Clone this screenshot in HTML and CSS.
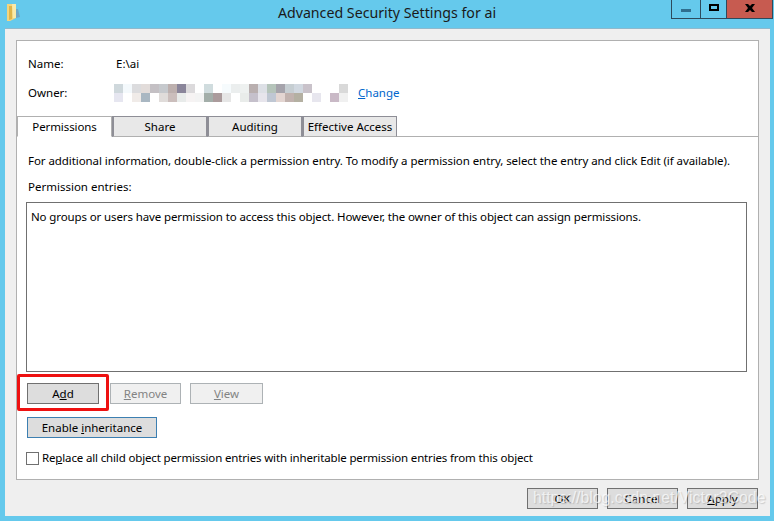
FILE: index.html
```html
<!DOCTYPE html>
<html lang="en">
<head>
    <meta charset="UTF-8">
    <title>Advanced Security Settings for ai</title>
    <link rel="stylesheet" href="styles.css">
</head>
<body>
    <div class="window">
        <!-- Title bar -->
        <div class="titlebar">
            <svg class="folder-icon" width="16" height="18" viewBox="0 0 16 18">
                <path d="M1 1h5l1 1h3v13l-6 3H1z" fill="#f3d57f"/>
                <path d="M3 3h3v13l-3 1z" fill="#e0b54a"/>
                <path d="M6 1h4v14H7z" fill="#fbe9a8"/>
                <path d="M10 6h2l2 8-4 1z" fill="#6fa6c4"/>
            </svg>
            <div class="title">Advanced Security Settings for ai</div>
            <div class="controls">
                <div class="ctl ctl-min"><span class="min-bar"></span></div>
                <div class="ctl ctl-max"><span class="max-box"></span></div>
                <div class="ctl ctl-close">
                    <svg width="10" height="8" viewBox="0 0 10 8"><path d="M0 0h3l2 2 2-2h3L7 4l3 4H7L5 6 3 8H0l3-4z" fill="#000"/></svg>
                </div>
            </div>
        </div>
        <div class="client">
            <div class="panel">
                <!-- Name and owner -->
                <div class="info-row row-name"><span class="info-label">Name:</span><span>E:\ai</span></div>
                <div class="info-row row-owner">
                    <span class="info-label">Owner:</span>
                    <svg class="owner-blur" width="234" height="18" viewBox="0 0 26 2" preserveAspectRatio="none" shape-rendering="crispEdges">
                        <g id="r1">
                            <rect x="0" y="0" width="1" height="1" fill="#cfd8dc"/><rect x="1" y="0" width="1" height="1" fill="#f4f9fc"/><rect x="2" y="0" width="1" height="1" fill="#dcdcde"/><rect x="3" y="0" width="1" height="1" fill="#e2dcda"/><rect x="4" y="0" width="1" height="1" fill="#c4c0c4"/><rect x="5" y="0" width="1" height="1" fill="#c6c9cd"/><rect x="6" y="0" width="1" height="1" fill="#bdb0ae"/><rect x="7" y="0" width="1" height="1" fill="#8a859a"/><rect x="8" y="0" width="1" height="1" fill="#dcdadc"/><rect x="10" y="0" width="1" height="1" fill="#d0dcde"/><rect x="12" y="0" width="1" height="1" fill="#f6fbfd"/><rect x="13" y="0" width="1" height="1" fill="#ebeeee"/><rect x="14" y="0" width="1" height="1" fill="#eef1f0"/><rect x="15" y="0" width="1" height="1" fill="#b9afaf"/><rect x="16" y="0" width="1" height="1" fill="#dde0e6"/><rect x="17" y="0" width="1" height="1" fill="#b5c4ba"/><rect x="18" y="0" width="1" height="1" fill="#a5a3ab"/><rect x="19" y="0" width="1" height="1" fill="#c6ced2"/><rect x="20" y="0" width="1" height="1" fill="#d1d8e0"/><rect x="21" y="0" width="1" height="1" fill="#c9c2ca"/><rect x="25" y="0" width="1" height="1" fill="#d9d9d9"/>
                        </g>
                        <g id="r2">
                            <rect x="0" y="1" width="1" height="1" fill="#e6e6f0"/><rect x="2" y="1" width="1" height="1" fill="#f0ebe8"/><rect x="3" y="1" width="1" height="1" fill="#a9b7c2"/><rect x="5" y="1" width="1" height="1" fill="#e0dcda"/><rect x="6" y="1" width="1" height="1" fill="#cbbebc"/><rect x="7" y="1" width="1" height="1" fill="#e8ebea"/><rect x="8" y="1" width="1" height="1" fill="#f6f3f3"/><rect x="9" y="1" width="1" height="1" fill="#f3f3f3"/><rect x="10" y="1" width="1" height="1" fill="#a3aea9"/><rect x="11" y="1" width="1" height="1" fill="#ab9b9c"/><rect x="12" y="1" width="1" height="1" fill="#e6e6e6"/><rect x="14" y="1" width="1" height="1" fill="#e9ecea"/><rect x="15" y="1" width="1" height="1" fill="#c5c0cb"/><rect x="16" y="1" width="1" height="1" fill="#e7e5ec"/><rect x="17" y="1" width="1" height="1" fill="#bfc7d3"/><rect x="18" y="1" width="1" height="1" fill="#e3d5d1"/><rect x="19" y="1" width="1" height="1" fill="#c1b2ae"/><rect x="20" y="1" width="1" height="1" fill="#b4b0a2"/><rect x="22" y="1" width="1" height="1" fill="#e7e6ee"/><rect x="24" y="1" width="1" height="1" fill="#c9b9c6"/><rect x="25" y="1" width="1" height="1" fill="#f0f0f0"/>
                        </g>
                    </svg>
                    <a class="change-link" href="#"><u>C</u>hange</a>
                </div>
                <!-- Tabs -->
                <div class="tabs">
                    <div class="tab tab-active">Permissions</div>
                    <div class="tab">Share</div>
                    <div class="tab">Auditing</div>
                    <div class="tab">Effective Access</div>
                </div>
                <!-- Permissions tab -->
                <div class="tab-body">
                    <p class="hint">For additional information, double-click a permission entry. To modify a permission entry, select the entry and click Edit (if available).</p>
                    <p class="entries-label">Permission entries:</p>
                    <div class="entries-box">No groups or users have permission to access this object. However, the owner of this object can assign permissions.</div>
                    <div class="btn-row">
                        <div class="add-wrap">
                            <button class="btn btn-add">A<u>d</u>d</button>
                            <span class="highlight"></span>
                        </div>
                        <button class="btn btn-off btn-remove"><u>R</u>emove</button>
                        <button class="btn btn-off btn-view"><u>V</u>iew</button>
                    </div>
                    <button class="btn btn-inherit">Enable <u>i</u>nheritance</button>
                    <label class="replace-row"><span class="checkbox"></span><span class="replace-text">Re<u>p</u>lace all child object permission entries with inheritable permission entries from this object</span></label>
                </div>
            </div>
            <!-- Dialog buttons -->
            <div class="footer">
                <button class="btn btn-foot">OK</button>
                <button class="btn btn-foot">Cancel</button>
                <button class="btn btn-foot"><u>A</u>pply</button>
            </div>
            <div class="watermark">https://blog.csdn.net/Victor2Code</div>
        </div>
    </div>
</body>
</html>
```

FILE: styles.css
```css
* {
    box-sizing: border-box;
}
html, body {
    margin: 0;
    height: 100%;
}
body {
    background: #65c9ec;
    color: #000;
    font-family: "Noto Sans", sans-serif;
    font-size: 11.5px;
    overflow: hidden;
}
.window {
    width: 774px;
    height: 521px;
    display: flex;
    flex-direction: column;
}
.titlebar {
    height: 28px;
    position: relative;
    display: flex;
    flex: none;
}
.folder-icon {
    margin: 3px 0 0 6px;
}
.title {
    position: absolute;
    left: 0;
    width: 774px;
    top: 3px;
    text-align: center;
    font-size: 14.2px;
    color: #1a1a1a;
}
.controls {
    position: absolute;
    top: 0;
    left: 671px;
    display: flex;
    height: 19px;
    border: 1px solid #2d4a5c;
    border-top: none;
}
.ctl {
    display: flex;
    justify-content: center;
    border-left: 1px solid #2d4a5c;
}
.ctl:first-child {
    border-left: none;
}
.ctl-min {
    width: 28px;
}
.ctl-max {
    width: 26px;
}
.ctl-close {
    width: 46px;
    background: #c75b50;
    padding-top: 4px;
}
.min-bar {
    width: 10px;
    height: 3px;
    margin-top: 9px;
    background: #2f6f8f;
}
.max-box {
    width: 10px;
    height: 7px;
    margin-top: 4px;
    border: 2px solid #000;
}
.client {
    flex: 1;
    margin: 0 4px 5px 5px;
    padding: 11px 11px 0;
    background: #efefef;
    border-top: 1px solid #8fb9cc;
    position: relative;
}
.panel {
    height: 440px;
    background: #fff;
    border: 1px solid #b0b0b0;
    display: flex;
    flex-direction: column;
}
.info-row {
    display: flex;
    align-items: center;
    height: 18px;
    padding-left: 11px;
}
.row-name {
    margin-top: 13px;
}
.row-owner {
    margin-top: 11px;
}
.info-label {
    width: 88px;
}
.owner-blur {
    width: 234px;
    height: 18px;
    margin: 1px 0 0 -2px;
}
.change-link {
    margin-left: 10px;
    color: #0066cc;
    text-decoration: none;
}
.tabs {
    display: flex;
    margin-top: 15px;
    height: 21px;
    border-bottom: 1px solid #b0b0b0;
}
.tab {
    width: 95px;
    height: 21px;
    background: #e8e8e8;
    border: 1px solid #8e8e96;
    border-left-width: 2px;
    border-bottom-color: #b0b0b0;
    display: flex;
    align-items: center;
    justify-content: center;
}
.tab-active {
    background: #fff;
    border-color: #b0b0b0;
    border-left-width: 1px;
    border-bottom-color: #fff;
    letter-spacing: -0.1px;
}
.tab-body {
    flex: 1;
    padding: 0 11px 0 9px;
}
.hint {
    margin: 16px 0 0 2px;
    line-height: 16px;
    white-space: nowrap;
    letter-spacing: -0.07px;
}
.entries-label {
    margin: 10px 0 0 2px;
    line-height: 16px;
}
.entries-box {
    margin-top: 7px;
    height: 170px;
    width: 721px;
    border: 1px solid #707070;
    padding: 6px 5px 6px 4px;
    line-height: 16px;
    letter-spacing: -0.12px;
}
.btn-row {
    display: flex;
    margin: 11px 0 0 1px;
}
.add-wrap {
    position: relative;
    display: flex;
}
.btn {
    height: 21px;
    padding: 0;
    font: inherit;
    color: #000;
    background: #dddddd;
    border: 1px solid #707070;
    border-radius: 0;
}
.btn-add {
    width: 72px;
}
.highlight {
    position: absolute;
    left: -10px;
    top: -9px;
    width: 92px;
    height: 37px;
    border: 3px solid #ee1111;
    border-radius: 2px;
}
.btn-off {
    background: #f0f0f0;
    border-color: #adb2b5;
    color: #838383;
}
.btn-remove {
    width: 71px;
    margin-left: 11px;
}
.btn-view {
    width: 73px;
    margin-left: 9px;
}
.btn-inherit {
    display: block;
    width: 130px;
    margin: 13px 0 0 1px;
    border-color: #3c7fb1;
}
.replace-row {
    display: flex;
    align-items: center;
    height: 16px;
    margin-top: 12px;
    white-space: nowrap;
}
.replace-text {
    letter-spacing: -0.15px;
    margin-top: -2px;
}
.checkbox {
    width: 13px;
    height: 13px;
    margin-right: 3px;
    background: #fff;
    border: 1px solid #707070;
}
.footer {
    display: flex;
    justify-content: flex-end;
    gap: 9px;
    margin-top: 8px;
    padding-right: 1px;
}
.btn-foot {
    width: 71px;
}
.watermark {
    position: absolute;
    left: 528px;
    top: 460px;
    font-family: "Liberation Sans", sans-serif;
    font-size: 15.8px;
    color: rgba(255, 255, 255, 0.7);
    text-shadow: 1px 1px 1px rgba(90, 90, 90, 0.25);
    white-space: nowrap;
}
```
